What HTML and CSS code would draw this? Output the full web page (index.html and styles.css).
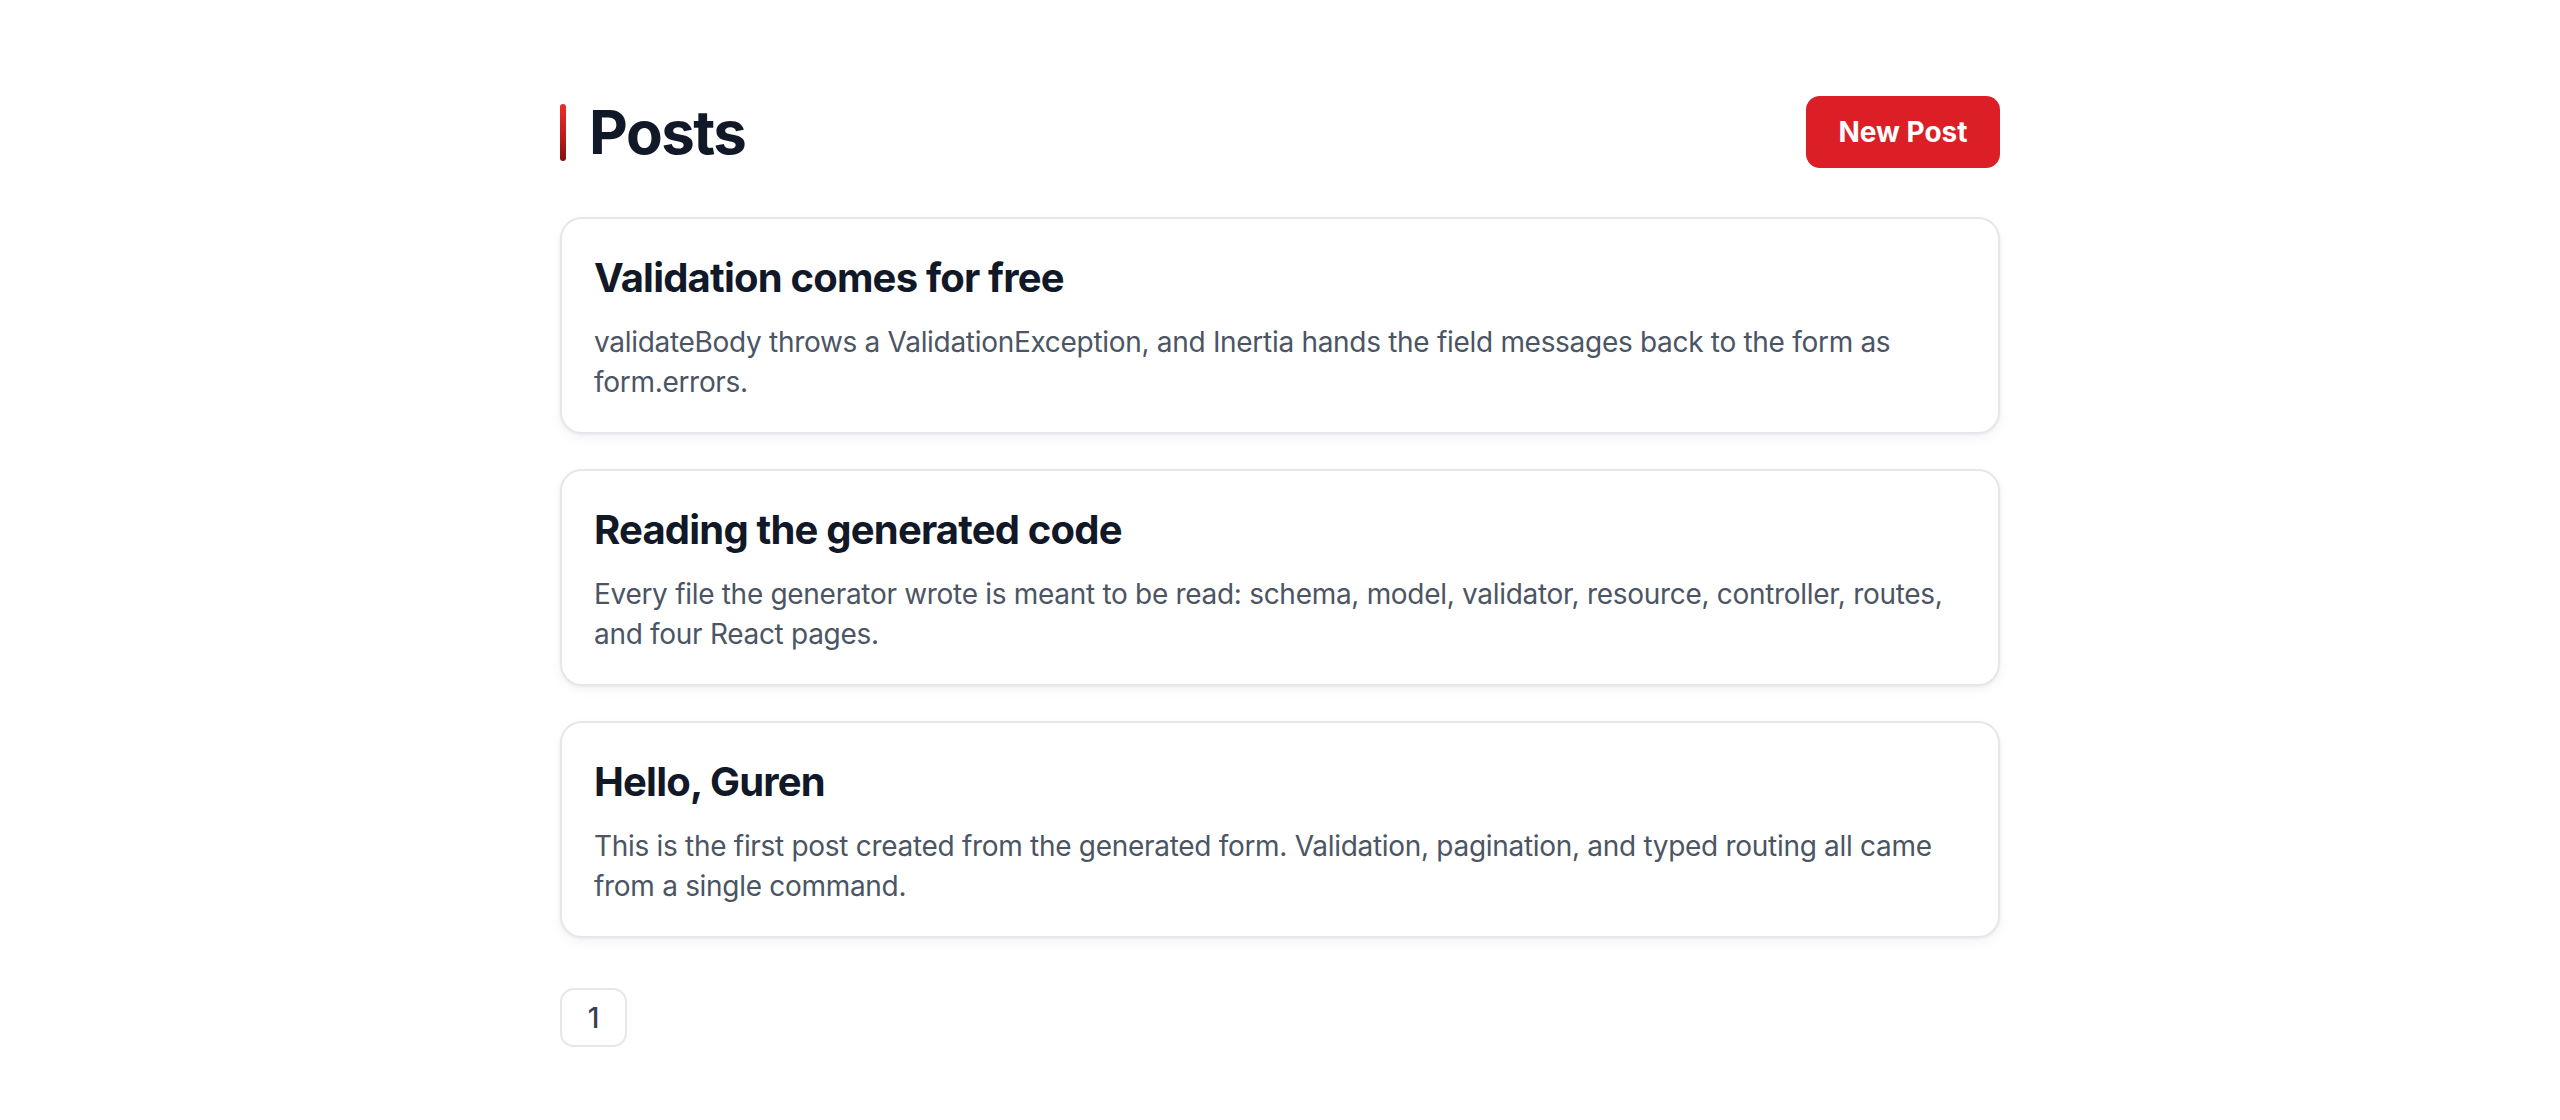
FILE: index.html
```html
<!DOCTYPE html>
<html lang="en">
<head>
<meta charset="utf-8">
<title>Posts</title>
<link rel="stylesheet" href="styles.css">
</head>
<body>
<main class="page">
  <header class="page-header">
    <h1 class="page-title"><span class="accent"></span>Posts</h1>
    <a class="btn-primary" href="#">New Post</a>
  </header>
  <section class="post-list">
    <article class="post-card">
      <h2 class="post-title">Validation comes for free</h2>
      <p class="post-body">validateBody throws a ValidationException, and Inertia hands the field messages back to the form as form.errors.</p>
    </article>
    <article class="post-card">
      <h2 class="post-title">Reading the generated code</h2>
      <p class="post-body">Every file the generator wrote is meant to be read: schema, model, validator, resource, controller, routes, and four React pages.</p>
    </article>
    <article class="post-card">
      <h2 class="post-title">Hello, Guren</h2>
      <p class="post-body">This is the first post created from the generated form. Validation, pagination, and typed routing all came from a single command.</p>
    </article>
  </section>
  <nav class="pagination">
    <a class="page-link" href="#">1</a>
  </nav>
</main>
</body>
</html>
```

FILE: styles.css
```css
* { box-sizing: border-box; }
html, body { margin: 0; padding: 0; background: #ffffff; }
body {
  font-family: Inter, "Noto Sans", "Liberation Sans", sans-serif;
  color: #111827;
}
.page {
  width: 1440px;
  margin: 0 auto;
  padding-top: 96px;
}
.page-header {
  display: flex;
  align-items: center;
  justify-content: space-between;
  height: 72px;
  margin-bottom: 49px;
}
.page-title {
  display: flex;
  align-items: center;
  gap: 23px;
  margin: 0;
  font-size: 60px;
  line-height: 72px;
  font-weight: 700;
  color: #111827;
  letter-spacing: -1.5px;
}
.accent {
  display: block;
  width: 6px;
  height: 57px;
  border-radius: 3px;
  background: linear-gradient(180deg, #ef2b2b 0%, #b91c1c 60%, #7f1010 100%);
}
.btn-primary {
  display: flex;
  align-items: center;
  justify-content: center;
  width: 194px;
  height: 72px;
  border-radius: 14px;
  background: #dc1f26;
  color: #ffffff;
  font-size: 28px;
  font-weight: 700;
  text-decoration: none;
}
.post-list {
  display: flex;
  flex-direction: column;
  gap: 35px;
}
.post-card {
  border: 2px solid #e5e7eb;
  border-radius: 22px;
  padding: 31px 31px 30px 32px;
  background: #ffffff;
  box-shadow: 0 4px 12px rgba(17, 24, 39, 0.05), 0 1px 3px rgba(17, 24, 39, 0.05);
}
.post-title {
  margin: 0 0 16px;
  font-size: 40px;
  line-height: 56px;
  font-weight: 700;
  color: #111827;
  letter-spacing: -0.8px;
}
.post-body {
  margin: 0;
  font-size: 28px;
  line-height: 40px;
  color: #4b5563;
  letter-spacing: -0.3px;
}
.pagination {
  display: flex;
  gap: 12px;
  margin-top: 50px;
}
.page-link {
  display: flex;
  align-items: center;
  justify-content: center;
  width: 67px;
  height: 59px;
  border: 2px solid #e5e7eb;
  border-radius: 14px;
  font-size: 28px;
  font-weight: 500;
  color: #374151;
  text-decoration: none;
}
```
